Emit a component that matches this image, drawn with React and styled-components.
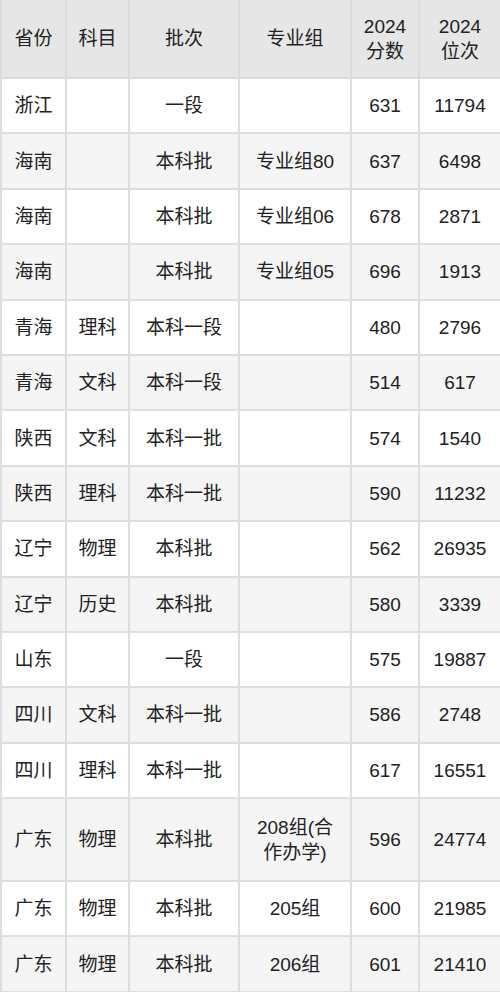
import styled, {createGlobalStyle} from "styled-components";

const GlobalStyle = createGlobalStyle`
  html, body {
    margin: 0;
    padding: 0;
    background: #ffffff;
  }
  body {
    font-family: "Liberation Sans", "Noto Sans CJK SC", sans-serif;
  }
`;

const Table = styled.table`
  width: 500px;
  table-layout: fixed;
  border-collapse: collapse;
  font-size: 19px;
  color: #222;
`;

const HeadCell = styled.th`
  height: 77px;
  padding: 0 4px;
  font-weight: 400;
  line-height: 25px;
  text-align: center;
  background: #e6e6e6;
  border: 2px solid #dcdcdc;
  border-top: none;
`;

const Row = styled.tr`
  background: ${(p) => (p.$striped ? "#f5f5f5" : "#ffffff")};
`;

const Cell = styled.td`
  height: ${(p) => (p.$tall ? "81px" : "53.4px")};
  padding: 0 ${(p) => (p.$tall ? "12px" : "4px")};
  line-height: 25px;
  text-align: center;
  border: 2px solid #dedede;
`;

const columns = [
    {width: 65, label: "省份"},
    {width: 63, label: "科目"},
    {width: 110, label: "批次"},
    {width: 112, label: "专业组"},
    {width: 68, label: ["2024", "分数"]},
    {width: 82, label: ["2024", "位次"]},
];

const rows = [
    ["浙江", "", "一段", "", "631", "11794"],
    ["海南", "", "本科批", "专业组80", "637", "6498"],
    ["海南", "", "本科批", "专业组06", "678", "2871"],
    ["海南", "", "本科批", "专业组05", "696", "1913"],
    ["青海", "理科", "本科一段", "", "480", "2796"],
    ["青海", "文科", "本科一段", "", "514", "617"],
    ["陕西", "文科", "本科一批", "", "574", "1540"],
    ["陕西", "理科", "本科一批", "", "590", "11232"],
    ["辽宁", "物理", "本科批", "", "562", "26935"],
    ["辽宁", "历史", "本科批", "", "580", "3339"],
    ["山东", "", "一段", "", "575", "19887"],
    ["四川", "文科", "本科一批", "", "586", "2748"],
    ["四川", "理科", "本科一批", "", "617", "16551"],
    ["广东", "物理", "本科批", "208组(合作办学)", "596", "24774"],
    ["广东", "物理", "本科批", "205组", "600", "21985"],
    ["广东", "物理", "本科批", "206组", "601", "21410"],
];

export default function App() {
    return (
        <>
            <GlobalStyle/>
            <Table>
                <colgroup>
                    {columns.map((c, i) => <col key={i} style={{width: c.width}}/>)}
                </colgroup>
                <thead>
                <tr>
                    {columns.map((c, i) => (
                        <HeadCell key={i}>
                            {Array.isArray(c.label) ? <>{c.label[0]}<br/>{c.label[1]}</> : c.label}
                        </HeadCell>
                    ))}
                </tr>
                </thead>
                <tbody>
                {rows.map((r, i) => {
                    const tall = r[3].length > 8
                    return (
                        <Row key={i} $striped={i % 2 === 1}>
                            {r.map((v, j) => <Cell key={j} $tall={tall && j === 3}>{v}</Cell>)}
                        </Row>
                    )
                })}
                </tbody>
            </Table>
        </>
    )
}
